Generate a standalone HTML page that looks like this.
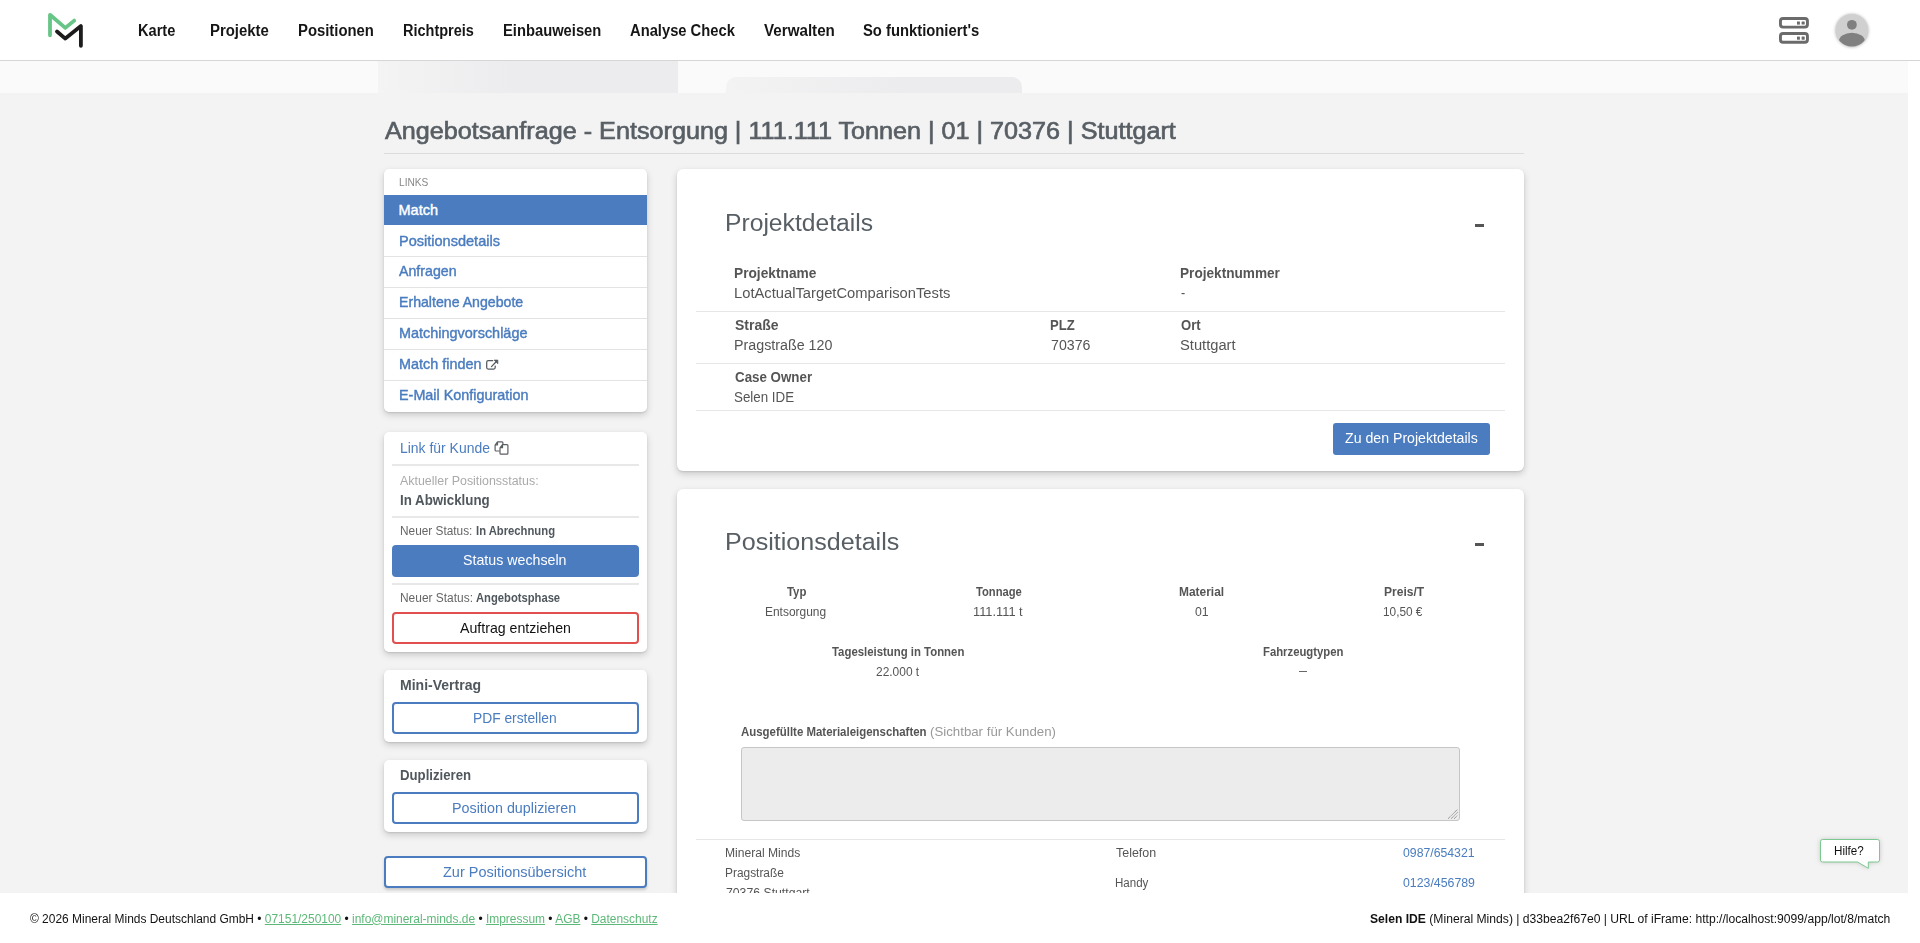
<!DOCTYPE html>
<html><head><meta charset="utf-8"><title>Match</title>
<style>html,body{margin:0;padding:0}body{width:1920px;height:943px;overflow:hidden;position:relative;background:#fff;font-family:'Liberation Sans', sans-serif}</style>
</head><body>
<div style="position:absolute;left:0px;top:0px;width:1920px;height:60px;background:#fff"></div>
<div style="position:absolute;left:0px;top:60px;width:1920px;height:1px;background:#d6d6d6"></div>
<div style="position:absolute;left:0px;top:61px;width:1908px;height:32px;background:#fafafa"></div>
<div style="position:absolute;left:378px;top:61px;width:300px;height:32px;background:linear-gradient(90deg,#f4f4f5,#ececee 45%,#ececee)"></div>
<div style="position:absolute;left:726px;top:77px;width:296px;height:16px;background:linear-gradient(90deg,#f3f3f4,#ececee 60%,#ececee);border-radius:10px 10px 0 0"></div>
<div style="position:absolute;left:0px;top:93px;width:1908px;height:800px;background:#f3f3f3"></div>
<div style="position:absolute;left:384px;top:153px;width:1140px;height:1px;background:#dcdcdc"></div>
<div style="position:absolute;left:384px;top:169px;width:263px;height:243px;background:#fff;border-radius:5px;box-shadow:0 3px 7px rgba(0,0,0,.17),0 1px 2px rgba(0,0,0,.1)"></div>
<div style="position:absolute;left:384px;top:195px;width:263px;height:30px;background:#4a7cbf"></div>
<div style="position:absolute;left:384px;top:256px;width:263px;height:1px;background:#e3e3e3"></div>
<div style="position:absolute;left:384px;top:287px;width:263px;height:1px;background:#e3e3e3"></div>
<div style="position:absolute;left:384px;top:318px;width:263px;height:1px;background:#e3e3e3"></div>
<div style="position:absolute;left:384px;top:349px;width:263px;height:1px;background:#e3e3e3"></div>
<div style="position:absolute;left:384px;top:380px;width:263px;height:1px;background:#e3e3e3"></div>
<div style="position:absolute;left:384px;top:432px;width:263px;height:220px;background:#fff;border-radius:5px;box-shadow:0 3px 7px rgba(0,0,0,.17),0 1px 2px rgba(0,0,0,.1)"></div>
<div style="position:absolute;left:392px;top:464px;width:247px;height:2px;background:#e8e8e8"></div>
<div style="position:absolute;left:392px;top:516px;width:247px;height:2px;background:#e8e8e8"></div>
<div style="position:absolute;left:392px;top:583px;width:247px;height:2px;background:#e8e8e8"></div>
<div style="position:absolute;left:392px;top:545px;width:247px;height:32px;background:#4a7cbf;border-radius:4px"></div>
<div style="position:absolute;left:392px;top:612px;width:247px;height:32px;box-sizing:border-box;border:2px solid #e05050;border-radius:4px"></div>
<div style="position:absolute;left:384px;top:670px;width:263px;height:72px;background:#fff;border-radius:5px;box-shadow:0 3px 7px rgba(0,0,0,.17),0 1px 2px rgba(0,0,0,.1)"></div>
<div style="position:absolute;left:392px;top:702px;width:247px;height:32px;box-sizing:border-box;border:2px solid #4a7cbf;border-radius:4px"></div>
<div style="position:absolute;left:384px;top:760px;width:263px;height:72px;background:#fff;border-radius:5px;box-shadow:0 3px 7px rgba(0,0,0,.17),0 1px 2px rgba(0,0,0,.1)"></div>
<div style="position:absolute;left:392px;top:792px;width:247px;height:32px;box-sizing:border-box;border:2px solid #4a7cbf;border-radius:4px"></div>
<div style="position:absolute;left:384px;top:856px;width:263px;height:32px;background:#fff;box-sizing:border-box;border:2px solid #4a7cbf;border-radius:4px;box-shadow:0 2px 3px rgba(0,0,0,.18)"></div>
<div style="position:absolute;left:677px;top:169px;width:847px;height:302px;background:#fff;border-radius:6px;box-shadow:0 3px 7px rgba(0,0,0,.17),0 1px 2px rgba(0,0,0,.1)"></div>
<div style="position:absolute;left:1475px;top:224px;width:9px;height:3px;background:#555"></div>
<div style="position:absolute;left:696px;top:311px;width:809px;height:1px;background:#e6e6e6"></div>
<div style="position:absolute;left:696px;top:363px;width:809px;height:1px;background:#e6e6e6"></div>
<div style="position:absolute;left:696px;top:410px;width:809px;height:1px;background:#e6e6e6"></div>
<div style="position:absolute;left:1333px;top:423px;width:157px;height:32px;background:#4a7cbf;border-radius:3px"></div>
<div style="position:absolute;left:677px;top:489px;width:847px;height:511px;background:#fff;border-radius:6px;box-shadow:0 3px 7px rgba(0,0,0,.17),0 1px 2px rgba(0,0,0,.1)"></div>
<div style="position:absolute;left:1475px;top:543px;width:9px;height:3px;background:#555"></div>
<div style="position:absolute;left:741px;top:747px;width:719px;height:74px;box-sizing:border-box;background:#ececec;border:1px solid #c6c6c6;border-radius:3px"></div>
<div style="position:absolute;left:696px;top:839px;width:809px;height:1px;background:#e6e6e6"></div>
<svg style="position:absolute;left:0;top:0" width="120" height="60" viewBox="0 0 120 60">
<polyline points="50,35.3 50,14.8 65.3,27.9 74.2,20.6" fill="none" stroke="#66c587" stroke-width="3.8" stroke-linecap="round" stroke-linejoin="round"/>
<polyline points="57,31.5 65.3,38.6 80.9,26.1 80.9,45.8" fill="none" stroke="#1c1c1c" stroke-width="3.8" stroke-linecap="round" stroke-linejoin="round"/>
</svg>
<svg style="position:absolute;left:1770px;top:10px" width="50" height="40" viewBox="1770 10 50 40">
<rect x="1780.45" y="18.45" width="27" height="8.7" rx="2.6" fill="none" stroke="#6b6b6b" stroke-width="2.9"/>
<rect x="1780.45" y="33.55" width="27" height="8.7" rx="2.6" fill="none" stroke="#6b6b6b" stroke-width="2.9"/>
<rect x="1797" y="21.5" width="2.9" height="3.1" fill="#6b6b6b"/><rect x="1801.6" y="21.5" width="3.1" height="3.1" rx="0.4" fill="#6b6b6b"/>
<rect x="1797" y="36.6" width="2.9" height="3.1" fill="#6b6b6b"/><rect x="1801.6" y="36.6" width="3.1" height="3.1" rx="0.4" fill="#6b6b6b"/>
</svg>
<svg style="position:absolute;left:1826px;top:4px" width="52" height="52" viewBox="1826 4 52 52">
<defs><clipPath id="avc"><circle cx="1851.9" cy="30.2" r="16.3"/></clipPath>
<filter id="avs" x="-30%" y="-30%" width="160%" height="160%"><feGaussianBlur stdDeviation="1.6"/></filter></defs>
<circle cx="1851.9" cy="30.6" r="16.6" fill="rgba(0,0,0,.28)" filter="url(#avs)"/>
<circle cx="1851.9" cy="30.2" r="16.3" fill="#d0d0d0"/>
<g clip-path="url(#avc)"><circle cx="1851.9" cy="24.8" r="4.9" fill="#808080"/>
<ellipse cx="1851.9" cy="41.6" rx="13.1" ry="8.9" fill="#808080"/></g>
</svg>
<svg style="position:absolute;left:484px;top:358px" width="16" height="14" viewBox="484 358 16 14">
<path d="M492.7 360.7 H488.2 Q486.7 360.7 486.7 362.2 V367.6 Q486.7 369.1 488.2 369.1 H493.7 Q495.2 369.1 495.2 367.6 V366" fill="none" stroke="#555a5f" stroke-width="1.25" stroke-linecap="round"/>
<path d="M491.5 366.6 L496.6 361.3" fill="none" stroke="#555a5f" stroke-width="1.3" stroke-linecap="round"/>
<path d="M494 360 H497.9 V363.9 Z" fill="#555a5f" stroke="#555a5f" stroke-width="0.6" stroke-linejoin="round"/>
</svg>
<svg style="position:absolute;left:492px;top:439px" width="19" height="18" viewBox="492 439 19 18">
<path d="M497.5 441.8 H502 Q502.9 441.8 502.9 442.7 V444.6 M499.6 451 H496 Q495.1 451 495.1 450.1 V445 L497.5 441.8 V444.8 H495.1" fill="none" stroke="#5a5f64" stroke-width="1.2" stroke-linejoin="round"/>
<path d="M502.5 444.7 H507 Q507.9 444.7 507.9 445.6 V453.2 Q507.9 454.1 507 454.1 H500.9 Q500 454.1 500 453.2 V447.9 L502.5 444.7 V447.7 H500" fill="none" stroke="#5a5f64" stroke-width="1.2" stroke-linejoin="round"/>
</svg>
<svg style="position:absolute;left:1445px;top:806px" width="14" height="14" viewBox="1445 806 14 14">
<path d="M1448.2 818.6 L1457.6 809.3 M1451.2 818.6 L1457.6 812.3 M1454.2 818.6 L1457.6 815.3" stroke="#6a6a6a" stroke-width="0.9" stroke-dasharray="1 0.6"/>
</svg>
<div style="position:absolute;left:1299px;top:671px;width:8px;height:1px;background:#666"></div>
<svg style="position:absolute;left:1810px;top:830px" width="80" height="48" viewBox="1810 830 80 48">
<defs><filter id="hs" x="-30%" y="-50%" width="160%" height="200%"><feGaussianBlur stdDeviation="2.5"/></filter></defs>
<path d="M1822.5 839.5 H1877.5 Q1879.5 839.5 1879.5 841.5 V860 Q1879.5 862 1877.5 862 H1868.3 V868.3 L1857.6 862 H1822.5 Q1820.5 862 1820.5 860 V841.5 Q1820.5 839.5 1822.5 839.5 Z" fill="rgba(0,0,0,.22)" filter="url(#hs)"/>
<path d="M1822.5 839.5 H1877.5 Q1879.5 839.5 1879.5 841.5 V860 Q1879.5 862 1877.5 862 H1868.3 V868.3 L1857.6 862 H1822.5 Q1820.5 862 1820.5 860 V841.5 Q1820.5 839.5 1822.5 839.5 Z" fill="#fff" stroke="#7cc990" stroke-width="1"/>
</svg>
<div style="position:absolute;left:137.69px;top:23.26px;font:bold 16px/1 'Liberation Sans', sans-serif;color:#161616;white-space:nowrap;transform-origin:0 0;transform:scaleX(0.9122);">Karte</div>
<div style="position:absolute;left:210.32px;top:23.26px;font:bold 16px/1 'Liberation Sans', sans-serif;color:#161616;white-space:nowrap;transform-origin:0 0;transform:scaleX(0.9325);">Projekte</div>
<div style="position:absolute;left:298.07px;top:23.26px;font:bold 16px/1 'Liberation Sans', sans-serif;color:#161616;white-space:nowrap;transform-origin:0 0;transform:scaleX(0.9284);">Positionen</div>
<div style="position:absolute;left:402.84px;top:23.26px;font:bold 16px/1 'Liberation Sans', sans-serif;color:#161616;white-space:nowrap;transform-origin:0 0;transform:scaleX(0.9058);">Richtpreis</div>
<div style="position:absolute;left:502.68px;top:23.26px;font:bold 16px/1 'Liberation Sans', sans-serif;color:#161616;white-space:nowrap;transform-origin:0 0;transform:scaleX(0.9212);">Einbauweisen</div>
<div style="position:absolute;left:630.00px;top:23.26px;font:bold 16px/1 'Liberation Sans', sans-serif;color:#161616;white-space:nowrap;transform-origin:0 0;transform:scaleX(0.9211);">Analyse Check</div>
<div style="position:absolute;left:764.10px;top:23.26px;font:bold 16px/1 'Liberation Sans', sans-serif;color:#161616;white-space:nowrap;transform-origin:0 0;transform:scaleX(0.9486);">Verwalten</div>
<div style="position:absolute;left:863.20px;top:23.26px;font:bold 16px/1 'Liberation Sans', sans-serif;color:#161616;white-space:nowrap;transform-origin:0 0;transform:scaleX(0.9248);">So funktioniert's</div>
<div style="position:absolute;left:384.50px;top:119.73px;font:normal 23px/1 'Liberation Sans', sans-serif;color:#575e64;-webkit-text-stroke:0.64px #575e64;white-space:nowrap;transform-origin:0 0;transform:scaleX(1.0945);">Angebotsanfrage - Entsorgung | 111.111 Tonnen | 01 | 70376 | Stuttgart</div>
<div style="position:absolute;left:398.57px;top:176.69px;font:normal 11px/1 'Liberation Sans', sans-serif;color:#888;white-space:nowrap;transform-origin:0 0;transform:scaleX(0.9250);">LINKS</div>
<div style="position:absolute;left:398.50px;top:202.63px;font:normal 14.5px/1 'Liberation Sans', sans-serif;color:#fff;-webkit-text-stroke:0.41px #fff;white-space:nowrap;transform-origin:0 0;transform:scaleX(1.0000);">Match</div>
<div style="position:absolute;left:398.50px;top:233.63px;font:normal 14.5px/1 'Liberation Sans', sans-serif;color:#4a7cbf;-webkit-text-stroke:0.41px #4a7cbf;white-space:nowrap;transform-origin:0 0;transform:scaleX(1.0020);">Positionsdetails</div>
<div style="position:absolute;left:398.80px;top:264.13px;font:normal 14.5px/1 'Liberation Sans', sans-serif;color:#4a7cbf;-webkit-text-stroke:0.41px #4a7cbf;white-space:nowrap;transform-origin:0 0;transform:scaleX(0.9780);">Anfragen</div>
<div style="position:absolute;left:398.53px;top:295.13px;font:normal 14.5px/1 'Liberation Sans', sans-serif;color:#4a7cbf;-webkit-text-stroke:0.41px #4a7cbf;white-space:nowrap;transform-origin:0 0;transform:scaleX(0.9748);">Erhaltene Angebote</div>
<div style="position:absolute;left:398.50px;top:326.23px;font:normal 14.5px/1 'Liberation Sans', sans-serif;color:#4a7cbf;-webkit-text-stroke:0.41px #4a7cbf;white-space:nowrap;transform-origin:0 0;transform:scaleX(0.9961);">Matchingvorschl&auml;ge</div>
<div style="position:absolute;left:398.51px;top:357.23px;font:normal 14.5px/1 'Liberation Sans', sans-serif;color:#4a7cbf;-webkit-text-stroke:0.41px #4a7cbf;white-space:nowrap;transform-origin:0 0;transform:scaleX(0.9928);">Match finden</div>
<div style="position:absolute;left:398.51px;top:388.23px;font:normal 14.5px/1 'Liberation Sans', sans-serif;color:#4a7cbf;-webkit-text-stroke:0.41px #4a7cbf;white-space:nowrap;transform-origin:0 0;transform:scaleX(0.9915);">E-Mail Konfiguration</div>
<div style="position:absolute;left:399.74px;top:440.63px;font:normal 14.5px/1 'Liberation Sans', sans-serif;color:#4a7cbf;white-space:nowrap;transform-origin:0 0;transform:scaleX(0.9613);">Link f&uuml;r Kunde</div>
<div style="position:absolute;left:399.80px;top:474.84px;font:normal 12px/1 'Liberation Sans', sans-serif;color:#aaa;white-space:nowrap;transform-origin:0 0;transform:scaleX(1.0338);">Aktueller Positionsstatus:</div>
<div style="position:absolute;left:399.58px;top:492.73px;font:bold 14.5px/1 'Liberation Sans', sans-serif;color:#50575d;white-space:nowrap;transform-origin:0 0;transform:scaleX(0.9175);">In Abwicklung</div>
<div style="position:absolute;left:399.51px;top:524.64px;font:normal 12px/1 'Liberation Sans', sans-serif;color:#666;white-space:nowrap;transform-origin:0 0;transform:scaleX(0.9863);">Neuer Status:</div>
<div style="position:absolute;left:476.30px;top:524.64px;font:bold 12px/1 'Liberation Sans', sans-serif;color:#50575d;white-space:nowrap;transform-origin:0 0;transform:scaleX(0.9381);">In Abrechnung</div>
<div style="position:absolute;left:462.52px;top:553.43px;font:normal 14.5px/1 'Liberation Sans', sans-serif;color:#fff;white-space:nowrap;transform-origin:0 0;transform:scaleX(0.9800);">Status wechseln</div>
<div style="position:absolute;left:399.61px;top:592.04px;font:normal 12px/1 'Liberation Sans', sans-serif;color:#666;white-space:nowrap;transform-origin:0 0;transform:scaleX(0.9945);">Neuer Status:</div>
<div style="position:absolute;left:476.30px;top:592.04px;font:bold 12px/1 'Liberation Sans', sans-serif;color:#50575d;white-space:nowrap;transform-origin:0 0;transform:scaleX(0.9344);">Angebotsphase</div>
<div style="position:absolute;left:459.90px;top:620.53px;font:normal 14.5px/1 'Liberation Sans', sans-serif;color:#111;white-space:nowrap;transform-origin:0 0;transform:scaleX(0.9761);">Auftrag entziehen</div>
<div style="position:absolute;left:399.63px;top:677.93px;font:bold 14.5px/1 'Liberation Sans', sans-serif;color:#50575d;white-space:nowrap;transform-origin:0 0;transform:scaleX(0.9675);">Mini-Vertrag</div>
<div style="position:absolute;left:472.65px;top:710.73px;font:normal 14.5px/1 'Liberation Sans', sans-serif;color:#4a7cbf;white-space:nowrap;transform-origin:0 0;transform:scaleX(0.9517);">PDF erstellen</div>
<div style="position:absolute;left:399.69px;top:767.93px;font:bold 14.5px/1 'Liberation Sans', sans-serif;color:#50575d;white-space:nowrap;transform-origin:0 0;transform:scaleX(0.9103);">Duplizieren</div>
<div style="position:absolute;left:452.41px;top:800.63px;font:normal 14.5px/1 'Liberation Sans', sans-serif;color:#4a7cbf;white-space:nowrap;transform-origin:0 0;transform:scaleX(0.9872);">Position duplizieren</div>
<div style="position:absolute;left:443.20px;top:864.73px;font:normal 14.5px/1 'Liberation Sans', sans-serif;color:#4a7cbf;white-space:nowrap;transform-origin:0 0;transform:scaleX(0.9986);">Zur Positions&uuml;bersicht</div>
<div style="position:absolute;left:724.76px;top:211.93px;font:normal 23px/1 'Liberation Sans', sans-serif;color:#575e64;white-space:nowrap;transform-origin:0 0;transform:scaleX(1.0725);">Projektdetails</div>
<div style="position:absolute;left:733.72px;top:266.15px;font:bold 14px/1 'Liberation Sans', sans-serif;color:#555;white-space:nowrap;transform-origin:0 0;transform:scaleX(0.9798);">Projektname</div>
<div style="position:absolute;left:733.65px;top:285.75px;font:normal 14px/1 'Liberation Sans', sans-serif;color:#555;white-space:nowrap;transform-origin:0 0;transform:scaleX(1.0532);">LotActualTargetComparisonTests</div>
<div style="position:absolute;left:1179.63px;top:266.15px;font:bold 14px/1 'Liberation Sans', sans-serif;color:#555;white-space:nowrap;transform-origin:0 0;transform:scaleX(0.9728);">Projektnummer</div>
<div style="position:absolute;left:1180.60px;top:285.75px;font:normal 14px/1 'Liberation Sans', sans-serif;color:#555;white-space:nowrap;transform-origin:0 0;transform:scaleX(0.9000);">-</div>
<div style="position:absolute;left:734.70px;top:317.85px;font:bold 14px/1 'Liberation Sans', sans-serif;color:#555;white-space:nowrap;transform-origin:0 0;transform:scaleX(0.9977);">Stra&szlig;e</div>
<div style="position:absolute;left:733.68px;top:337.55px;font:normal 14px/1 'Liberation Sans', sans-serif;color:#555;white-space:nowrap;transform-origin:0 0;transform:scaleX(1.0198);">Pragstra&szlig;e 120</div>
<div style="position:absolute;left:1049.66px;top:317.85px;font:bold 14px/1 'Liberation Sans', sans-serif;color:#555;white-space:nowrap;transform-origin:0 0;transform:scaleX(0.9370);">PLZ</div>
<div style="position:absolute;left:1050.60px;top:337.55px;font:normal 14px/1 'Liberation Sans', sans-serif;color:#555;white-space:nowrap;transform-origin:0 0;transform:scaleX(1.0128);">70376</div>
<div style="position:absolute;left:1180.60px;top:317.85px;font:bold 14px/1 'Liberation Sans', sans-serif;color:#555;white-space:nowrap;transform-origin:0 0;transform:scaleX(0.9333);">Ort</div>
<div style="position:absolute;left:1179.55px;top:337.55px;font:normal 14px/1 'Liberation Sans', sans-serif;color:#555;white-space:nowrap;transform-origin:0 0;transform:scaleX(1.0509);">Stuttgart</div>
<div style="position:absolute;left:734.70px;top:369.75px;font:bold 14px/1 'Liberation Sans', sans-serif;color:#555;white-space:nowrap;transform-origin:0 0;transform:scaleX(0.9531);">Case Owner</div>
<div style="position:absolute;left:733.75px;top:389.75px;font:normal 14px/1 'Liberation Sans', sans-serif;color:#555;white-space:nowrap;transform-origin:0 0;transform:scaleX(0.9540);">Selen IDE</div>
<div style="position:absolute;left:1344.90px;top:431.35px;font:normal 14px/1 'Liberation Sans', sans-serif;color:#fff;white-space:nowrap;transform-origin:0 0;transform:scaleX(1.0099);">Zu den Projektdetails</div>
<div style="position:absolute;left:724.72px;top:530.93px;font:normal 23px/1 'Liberation Sans', sans-serif;color:#575e64;white-space:nowrap;transform-origin:0 0;transform:scaleX(1.0906);">Positionsdetails</div>
<div style="position:absolute;left:787.00px;top:585.64px;font:bold 12px/1 'Liberation Sans', sans-serif;color:#555;white-space:nowrap;transform-origin:0 0;transform:scaleX(0.9500);">Typ</div>
<div style="position:absolute;left:765.40px;top:605.74px;font:normal 12px/1 'Liberation Sans', sans-serif;color:#555;white-space:nowrap;transform-origin:0 0;transform:scaleX(0.9951);">Entsorgung</div>
<div style="position:absolute;left:976.10px;top:585.64px;font:bold 12px/1 'Liberation Sans', sans-serif;color:#555;white-space:nowrap;transform-origin:0 0;transform:scaleX(0.9327);">Tonnage</div>
<div style="position:absolute;left:972.93px;top:605.74px;font:normal 12px/1 'Liberation Sans', sans-serif;color:#555;white-space:nowrap;transform-origin:0 0;transform:scaleX(1.0681);">111.111 t</div>
<div style="position:absolute;left:1178.90px;top:585.64px;font:bold 12px/1 'Liberation Sans', sans-serif;color:#555;white-space:nowrap;transform-origin:0 0;transform:scaleX(0.9956);">Material</div>
<div style="position:absolute;left:1194.50px;top:605.74px;font:normal 12px/1 'Liberation Sans', sans-serif;color:#555;white-space:nowrap;transform-origin:0 0;transform:scaleX(1.0231);">01</div>
<div style="position:absolute;left:1383.50px;top:585.64px;font:bold 12px/1 'Liberation Sans', sans-serif;color:#555;white-space:nowrap;transform-origin:0 0;transform:scaleX(1.0025);">Preis/T</div>
<div style="position:absolute;left:1383.22px;top:605.74px;font:normal 12px/1 'Liberation Sans', sans-serif;color:#555;white-space:nowrap;transform-origin:0 0;transform:scaleX(0.9850);">10,50 &euro;</div>
<div style="position:absolute;left:832.20px;top:645.84px;font:bold 12px/1 'Liberation Sans', sans-serif;color:#555;white-space:nowrap;transform-origin:0 0;transform:scaleX(0.9482);">Tagesleistung in Tonnen</div>
<div style="position:absolute;left:875.80px;top:665.84px;font:normal 12px/1 'Liberation Sans', sans-serif;color:#555;white-space:nowrap;transform-origin:0 0;transform:scaleX(0.9955);">22.000 t</div>
<div style="position:absolute;left:1262.60px;top:645.84px;font:bold 12px/1 'Liberation Sans', sans-serif;color:#555;white-space:nowrap;transform-origin:0 0;transform:scaleX(0.9424);">Fahrzeugtypen</div>
<div style="position:absolute;left:741.00px;top:724.80px;font:bold 13px/1 'Liberation Sans', sans-serif;color:#555;white-space:nowrap;transform-origin:0 0;transform:scaleX(0.8796);">Ausgef&uuml;llte Materialeigenschaften</div>
<div style="position:absolute;left:929.98px;top:724.80px;font:normal 13px/1 'Liberation Sans', sans-serif;color:#999;white-space:nowrap;transform-origin:0 0;transform:scaleX(1.0195);">(Sichtbar f&uuml;r Kunden)</div>
<div style="position:absolute;left:724.79px;top:846.84px;font:normal 12px/1 'Liberation Sans', sans-serif;color:#555;white-space:nowrap;transform-origin:0 0;transform:scaleX(1.0080);">Mineral Minds</div>
<div style="position:absolute;left:724.81px;top:866.84px;font:normal 12px/1 'Liberation Sans', sans-serif;color:#555;white-space:nowrap;transform-origin:0 0;transform:scaleX(0.9915);">Pragstra&szlig;e</div>
<div style="position:absolute;left:725.80px;top:886.84px;font:normal 12px/1 'Liberation Sans', sans-serif;color:#555;white-space:nowrap;transform-origin:0 0;transform:scaleX(1.0207);">70376 Stuttgart</div>
<div style="position:absolute;left:1115.60px;top:846.84px;font:normal 12px/1 'Liberation Sans', sans-serif;color:#555;white-space:nowrap;transform-origin:0 0;transform:scaleX(1.0368);">Telefon</div>
<div style="position:absolute;left:1114.64px;top:876.64px;font:normal 12px/1 'Liberation Sans', sans-serif;color:#555;white-space:nowrap;transform-origin:0 0;transform:scaleX(0.9629);">Handy</div>
<div style="position:absolute;left:1402.50px;top:846.84px;font:normal 12px/1 'Liberation Sans', sans-serif;color:#4a7cbf;white-space:nowrap;transform-origin:0 0;transform:scaleX(1.0214);">0987/654321</div>
<div style="position:absolute;left:1402.50px;top:876.84px;font:normal 12px/1 'Liberation Sans', sans-serif;color:#4a7cbf;white-space:nowrap;transform-origin:0 0;transform:scaleX(1.0271);">0123/456789</div>
<div style="position:absolute;left:1833.93px;top:844.54px;font:normal 12px/1 'Liberation Sans', sans-serif;color:#111;white-space:nowrap;transform-origin:0 0;transform:scaleX(0.9710);">Hilfe?</div>
<div style="position:absolute;left:0px;top:893px;width:1920px;height:50px;background:#fff"></div>
<div style="position:absolute;left:29.70px;top:912.54px;font:normal 12px/1 'Liberation Sans', sans-serif;color:#111;white-space:nowrap;transform-origin:0 0;transform:scaleX(0.9957);">&copy; 2026 Mineral Minds Deutschland GmbH &bull; <span style="color:#5cb878;text-decoration:underline">07151/250100</span> &bull; <span style="color:#5cb878;text-decoration:underline">info@mineral-minds.de</span> &bull; <span style="color:#5cb878;text-decoration:underline">Impressum</span> &bull; <span style="color:#5cb878;text-decoration:underline">AGB</span> &bull; <span style="color:#5cb878;text-decoration:underline">Datenschutz</span></div>
<div style="position:absolute;left:1370.20px;top:912.54px;font:normal 12px/1 'Liberation Sans', sans-serif;color:#111;white-space:nowrap;transform-origin:0 0;transform:scaleX(1.0109);"><b>Selen IDE</b> (Mineral Minds) | d33bea2f67e0 | URL of iFrame: http://localhost:9099/app/lot/8/match</div>
</body></html>
